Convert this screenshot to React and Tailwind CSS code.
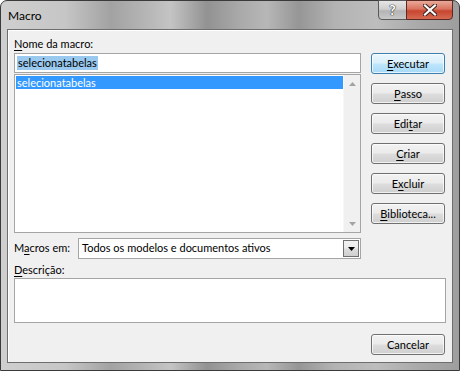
import React from 'react';

const font = "[font-family:Lato,'Liberation_Sans',sans-serif]";

function U({ children }) {
  return <span className="underline underline-offset-[2px]">{children}</span>;
}

function DlgButton({ children, primary = false, className = '' }) {
  const look = primary
    ? 'border-[#3c7fb1] bg-[linear-gradient(180deg,#eaf6fd_0%,#d9f0fc_48%,#bee6fd_52%,#a7d9f5_100%)]'
    : 'border-[#707070] bg-[linear-gradient(180deg,#f2f2f2_0%,#ebebeb_48%,#dddddd_52%,#cfcfcf_100%)]';
  return (
    <button
      type="button"
      className={`flex h-[21px] w-[74px] items-center justify-center rounded-[3px] border text-[11px] leading-none text-black shadow-[inset_0_0_0_1px_rgba(255,255,255,0.7)] ${look} ${className}`}
    >
      {children}
    </button>
  );
}

function Triangle({ down = false }) {
  return (
    <svg width="7" height="4" viewBox="0 0 7 4" className="block">
      {down ? (
        <path d="M0 0H7L3.5 4Z" fill="#a3a3a3" />
      ) : (
        <path d="M0 4H7L3.5 0Z" fill="#a3a3a3" />
      )}
    </svg>
  );
}

export default function App() {
  const buttons = [
    { label: <><U>E</U>xecutar</>, primary: true },
    { label: <><U>P</U>asso</> },
    { label: <>Edi<U>t</U>ar</> },
    { label: <><U>C</U>riar</> },
    { label: <>E<U>x</U>cluir</> },
    { label: <><U>B</U>iblioteca...</> },
  ];

  return (
    <div className={`h-[371px] w-[460px] overflow-hidden bg-white ${font}`}>
      <div className="flex h-full w-full flex-col rounded-t-[7px] border border-[#3a3a3a] bg-[linear-gradient(90deg,#cfcfcf_0%,#c6c6c6_14%,#a2a2a2_24%,#b9b9b9_33%,#c4c4c4_37%,#929292_45%,#a9a9a9_52%,#b7b7b7_58%,#969696_65%,#b3b3b3_73%,#bdbdbd_82%,#a8a8a8_92%,#9e9e9e_100%)]">
        {/* title bar */}
        <div className="flex h-[28px] items-start justify-between">
          <span className="pl-[7px] pt-[8px] text-[12px] leading-[14px] text-black">Macro</span>
          <div className="-mt-px mr-[6px] flex">
            <div className="flex h-[20px] w-[29px] items-center justify-center rounded-bl-[4px] border border-[#5a5a5a] bg-[linear-gradient(180deg,#e6e6e6_0%,#cfcfcf_45%,#b4b4b4_55%,#c8c8c8_100%)]">
              <span className="text-[14px] font-bold leading-none text-white [text-shadow:0_0_1px_#333,0_0_1px_#333,0_0_1px_#333]">?</span>
            </div>
            <div className="-ml-px flex h-[20px] w-[47px] items-center justify-center rounded-br-[4px] border border-[#5a2a22] bg-[linear-gradient(180deg,#e9a99a_0%,#d9725e_45%,#c7452f_55%,#d66a52_100%)]">
              <svg width="14" height="12" viewBox="0 0 14 12">
                <path d="M2 1.5L12 10.5M12 1.5L2 10.5" stroke="#3b2420" strokeWidth="4.2" strokeLinecap="square" />
                <path d="M2 1.5L12 10.5M12 1.5L2 10.5" stroke="#ffffff" strokeWidth="2.2" strokeLinecap="square" />
              </svg>
            </div>
          </div>
        </div>

        {/* client area */}
        <div className="mx-[6px] mb-[7px] flex flex-1 flex-col border border-[#6e6e6e] bg-[#f0f0f0] px-[6px] pt-[6px] text-[11px] text-black shadow-[inset_1px_1px_0_#ffffff]">
          <div className="h-[15px] leading-[15px]">
            <U>N</U>ome da macro:
          </div>
          <div className="mt-[2px] flex gap-[10px]">
            <div className="flex w-[347px] flex-col">
              <div className="flex h-[20px] items-center border border-[#a5a5a5] bg-white pl-[2px]">
                <span className="bg-[#99c9ef] px-px leading-[14px]">selecionatabelas</span>
              </div>
              <div className="mt-px flex h-[159px] border border-[#a5a5a5] bg-white">
                <div className="flex-1 pl-px pt-px">
                  <div className="h-[13px] bg-[#3399ff] pl-[1px] leading-[13px] text-white">selecionatabelas</div>
                </div>
                <div className="flex w-[17px] flex-col justify-between border-l border-[#f7f7f7] bg-[#f0f0f0]">
                  <div className="flex h-[17px] items-center justify-center">
                    <Triangle />
                  </div>
                  <div className="flex h-[17px] items-center justify-center">
                    <Triangle down />
                  </div>
                </div>
              </div>
              <div className="mt-[5px] flex h-[21px] items-center">
                <span className="w-[64px]">
                  M<U>a</U>cros em:
                </span>
                <div className="flex h-[21px] flex-1 items-center border border-[#a5a5a5] bg-white pl-[3px]">
                  <span className="flex-1">Todos os modelos e documentos ativos</span>
                  <div className="mr-px flex h-[17px] w-[16px] items-center justify-center border border-[#707070] bg-[linear-gradient(180deg,#f2f2f2_0%,#ebebeb_48%,#dddddd_52%,#cfcfcf_100%)]">
                    <svg width="7" height="4" viewBox="0 0 7 4">
                      <path d="M0 0H7L3.5 4Z" fill="#000000" />
                    </svg>
                  </div>
                </div>
              </div>
            </div>
            <div className="flex flex-col gap-[9px]">
              {buttons.map((b, i) => (
                <DlgButton key={i} primary={b.primary}>
                  {b.label}
                </DlgButton>
              ))}
            </div>
          </div>
          <div className="mt-[3px] h-[15px] leading-[15px]">
            <U>D</U>escrição:
          </div>
          <div className="mt-px h-[45px] border border-[#a5a5a5] bg-white" />
          <div className="mt-[11px] flex justify-end">
            <DlgButton className="mr-px">Cancelar</DlgButton>
          </div>
        </div>
      </div>
    </div>
  );
}
